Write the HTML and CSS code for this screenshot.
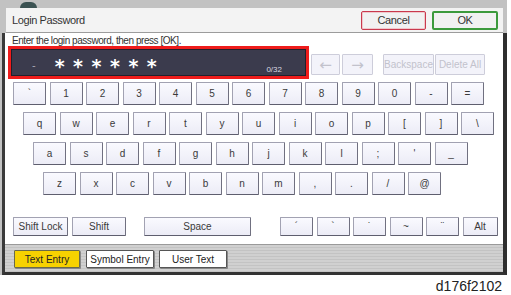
FILE: index.html
```html
<!DOCTYPE html>
<html lang="en">
<head>
    <meta charset="UTF-8">
    <meta name="viewport" content="width=device-width, initial-scale=1.0">
    <title>Login Password</title>
    <link rel="stylesheet" href="styles.css">
</head>
<body>
    <div class="screen">
        <div class="topstrip"><span class="blob"></span></div>
        <div class="titlebar">
            <span class="title">Login Password</span>
            <div class="actions">
                <button class="btn cancel">Cancel</button>
                <button class="btn ok">OK</button>
            </div>
        </div>
        <div class="main">
            <div class="body">
                <p class="msg">Enter the login password, then press [OK].</p>
                <div class="entry-row">
                    <div class="field">
                        <span class="cursor">-</span>
                        <span class="mask">******</span>
                        <span class="count">0/32</span>
                    </div>
                    <div class="edit-keys">
                        <button class="key off arrow left">&larr;</button>
                        <button class="key off arrow right">&rarr;</button>
                        <button class="key off wide bs">Backspace</button>
                        <button class="key off wide del">Delete All</button>
                    </div>
                </div>

                <div class="kb">
                    <div class="row r1">
                        <button class="key">`</button>
                        <button class="key">1</button>
                        <button class="key">2</button>
                        <button class="key">3</button>
                        <button class="key">4</button>
                        <button class="key">5</button>
                        <button class="key">6</button>
                        <button class="key">7</button>
                        <button class="key">8</button>
                        <button class="key">9</button>
                        <button class="key">0</button>
                        <button class="key">-</button>
                        <button class="key">=</button>
                    </div>
                    <div class="row r2">
                        <button class="key">q</button>
                        <button class="key">w</button>
                        <button class="key">e</button>
                        <button class="key">r</button>
                        <button class="key">t</button>
                        <button class="key">y</button>
                        <button class="key">u</button>
                        <button class="key">i</button>
                        <button class="key">o</button>
                        <button class="key">p</button>
                        <button class="key">[</button>
                        <button class="key">]</button>
                        <button class="key">\</button>
                    </div>
                    <div class="row r3">
                        <button class="key">a</button>
                        <button class="key">s</button>
                        <button class="key">d</button>
                        <button class="key">f</button>
                        <button class="key">g</button>
                        <button class="key">h</button>
                        <button class="key">j</button>
                        <button class="key">k</button>
                        <button class="key">l</button>
                        <button class="key">;</button>
                        <button class="key">'</button>
                        <button class="key">_</button>
                    </div>
                    <div class="row r4">
                        <button class="key">z</button>
                        <button class="key">x</button>
                        <button class="key">c</button>
                        <button class="key">v</button>
                        <button class="key">b</button>
                        <button class="key">n</button>
                        <button class="key">m</button>
                        <button class="key">,</button>
                        <button class="key">.</button>
                        <button class="key">/</button>
                        <button class="key">@</button>
                    </div>
                </div>

                <div class="mods">
                    <button class="key mod shiftlock">Shift Lock</button>
                    <button class="key mod shift">Shift</button>
                    <button class="key mod space">Space</button>
                    <div class="accents">
                        <button class="key mod acc">&acute;</button>
                        <button class="key mod acc">`</button>
                        <button class="key mod acc">&#729;</button>
                        <button class="key mod acc">~</button>
                        <button class="key mod acc">&uml;</button>
                        <button class="key mod alt">Alt</button>
                    </div>
                </div>
            </div>

            <div class="tabs">
                <button class="tab active">Text Entry</button>
                <button class="tab">Symbol Entry</button>
                <button class="tab">User Text</button>
            </div>
        </div>
        <div class="caption">d176f2102</div>
    </div>
</body>
</html>
```

FILE: styles.css
```css
body {
    margin: 0;
    background: #fff;
    font-family: "Liberation Sans", Arial, sans-serif;
    color: #333;
}

button {
    font-family: inherit;
    padding: 0;
    margin: 0;
    cursor: pointer;
}

.screen {
    width: 507px;
    background: #c2c2c2;
    padding-left: 2px;
    box-sizing: border-box;
}

.topstrip {
    height: 8px;
    margin-left: -2px;
    display: flex;
}

.blob {
    width: 17px;
    height: 6px;
    margin: 2px 0 0 20px;
    background: #3b5252;
    border-radius: 9px 9px 0 0;
}

/* title bar */
.titlebar {
    margin-left: 4px;
    width: 497px;
    height: 25px;
    box-sizing: border-box;
    background: #f3f3f3;
    border-bottom: 1px solid #9c9c9c;
    display: flex;
    align-items: center;
    padding: 0 5px 0 6px;
}

.title {
    font-size: 11px;
    letter-spacing: -0.4px;
    color: #333;
}

.actions {
    margin-left: auto;
    display: flex;
    gap: 6px;
}

.btn {
    height: 19px;
    background: #f1f1f1;
    border-radius: 2px;
    font-size: 11px;
    letter-spacing: -0.4px;
    color: #333;
}

.cancel {
    width: 65px;
    border: 1px solid #c9394d;
    box-shadow: inset 0 0 0 1px #f0c8cc;
}

.ok {
    width: 66px;
    border: 2px solid #3c9a3c;
}

/* main panel */
.main {
    border-left: 3px solid #3a3a3a;
    border-right: 4px solid #2e2e2e;
    border-bottom: 3px solid #333;
}

.body {
    background: #fff;
    padding: 2px 0 8px 3px;
}

.msg {
    margin: 0 0 0 4px;
    font-size: 10px;
    line-height: 11px;
    height: 11px;
    letter-spacing: -0.45px;
    color: #333;
    white-space: nowrap;
}

.entry-row {
    display: flex;
    align-items: flex-end;
}

.field {
    width: 301px;
    height: 33px;
    box-sizing: border-box;
    border: 3px solid #ee1c1c;
    background: #3b3b4d;
    box-shadow: inset 0 0 0 1px #20202c;
    display: flex;
    align-items: center;
    position: relative;
}

.cursor {
    color: #a8a8b4;
    font-size: 11px;
    margin-left: 21px;
    margin-top: 4px;
}

.mask {
    color: #fff;
    font-family: "DejaVu Sans", sans-serif;
    font-weight: bold;
    font-size: 19px;
    letter-spacing: 8.5px;
    margin-left: 19px;
    margin-top: 6px;
}

.count {
    position: absolute;
    right: 24px;
    bottom: 2px;
    font-size: 8px;
    color: #d8d8e0;
}

.edit-keys {
    display: flex;
    margin: 0 0 4px 2px;
}

/* keys */
.key {
    width: 33px;
    height: 23px;
    box-sizing: border-box;
    background: linear-gradient(#fafaff, #ececf6);
    border: 1px solid #a2a2b2;
    border-right-color: #707080;
    border-bottom-color: #5e5e6e;
    border-radius: 1px;
    font-size: 10px;
    color: #3a3a3a;
}

.key.off {
    height: 21px;
    background: #f3f3fa;
    border-color: #cdcdda;
    color: #c2c2cc;
}

.arrow {
    font-size: 15px;
    font-family: "DejaVu Sans", sans-serif;
}

.arrow.left {
    width: 29px;
}

.arrow.right {
    width: 31px;
    margin-left: 2px;
}

.wide.bs {
    width: 51px;
    margin-left: 10px;
}

.wide.del {
    width: 50px;
    margin-left: 1px;
}

.kb {
    margin-top: 3px;
}

.row {
    display: flex;
    gap: 3.5px;
    margin-bottom: 7px;
}

.row:last-child {
    margin-bottom: 0;
}

.r1 { padding-left: 5px; }
.r2 { padding-left: 15px; }
.r3 { padding-left: 25px; }
.r4 { padding-left: 35px; }

.mods {
    display: flex;
    margin-top: 22px;
    padding-left: 5px;
}

.key.mod {
    height: 19px;
}

.shiftlock {
    width: 55px;
}

.key.shift {
    width: 54px;
    margin-left: 4px;
}

.key.space {
    width: 107px;
    margin-left: 18px;
}

.accents {
    display: flex;
    gap: 3.5px;
    margin-left: 29px;
}

.key.alt {
    width: 35px;
}

/* tabs */
.tabs {
    height: 28px;
    box-sizing: border-box;
    padding: 5px 0 0 9px;
    display: flex;
    align-items: flex-start;
    background: repeating-linear-gradient(#d0d0d0 0 2px, #c3c3c3 2px 3px);
    border-top: 1px solid #9a9a9a;
}

.tab {
    height: 18px;
    width: 68px;
    background: #fff;
    border: 1px solid #555;
    border-radius: 1px;
    box-shadow: 1px 1px 0 #888;
    font-size: 10px;
    color: #222;
    margin-left: 5px;
}

.tab.active {
    width: 66px;
    margin-left: 0;
    margin-right: 1px;
    background: #f7d200;
    border-color: #6a6a4a;
}

.caption {
    background: #fff;
    margin-left: -2px;
    padding: 4px 5px 3px 0;
    text-align: right;
    font-size: 14px;
    line-height: 14px;
    color: #222;
}
```
